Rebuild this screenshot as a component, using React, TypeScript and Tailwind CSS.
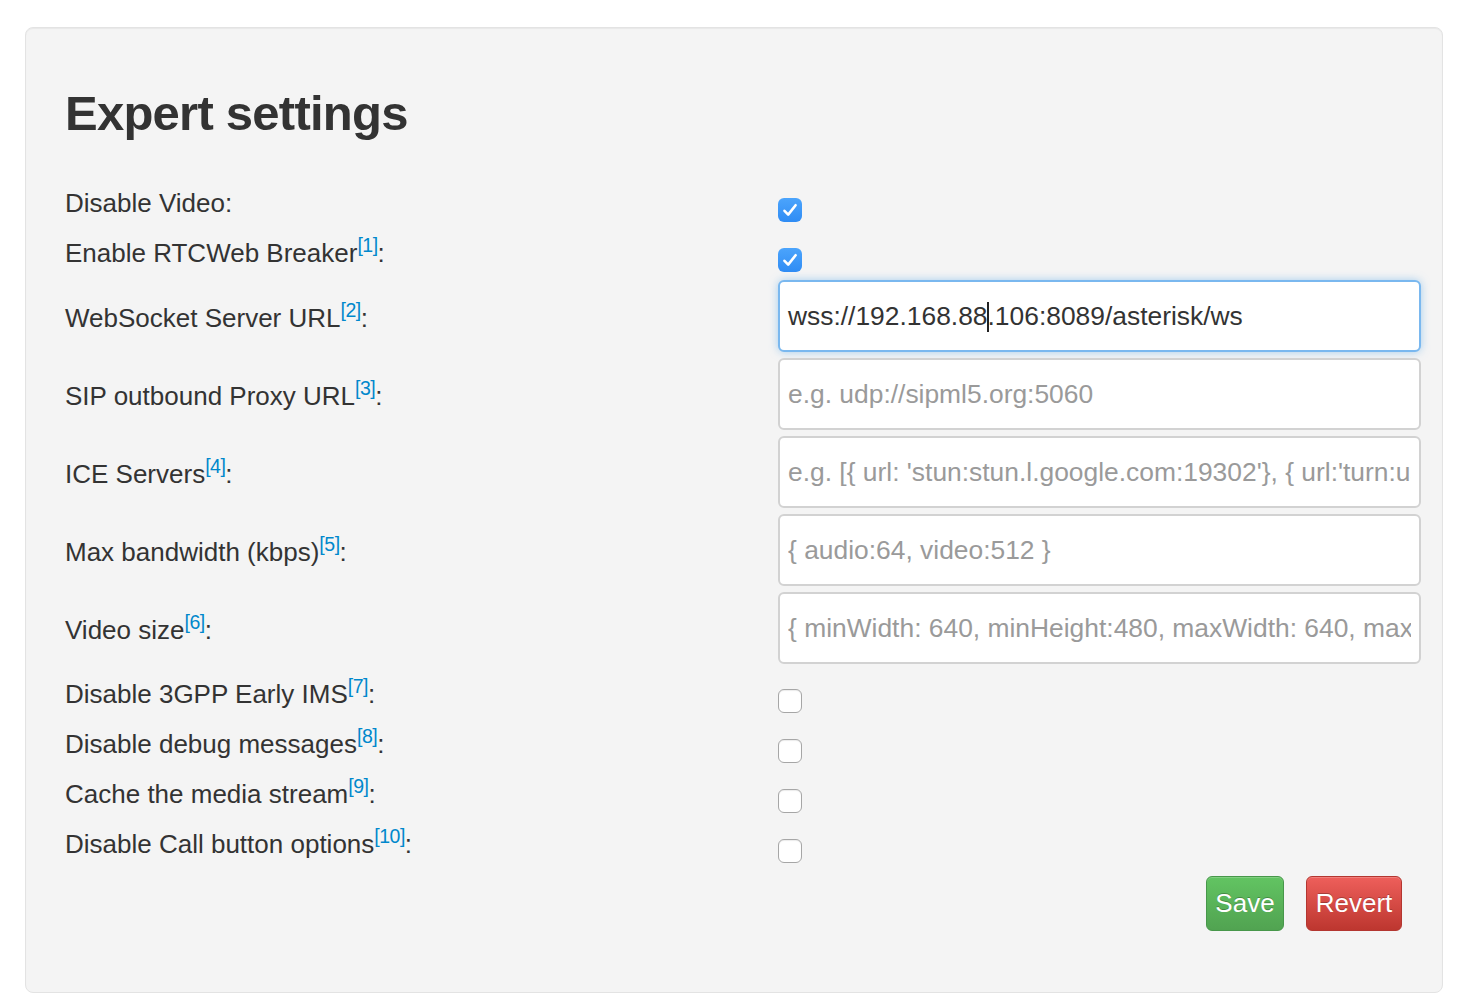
import { Fragment } from "react";

type Row =
  | { kind: "check"; label: string; note?: number; checked: boolean; h: string }
  | { kind: "text"; label: string; note: number; placeholder?: string; value?: string };

const rowsTop: Row[] = [
  { kind: "check", label: "Disable Video", checked: true, h: "h-[50px]" },
  { kind: "check", label: "Enable RTCWeb Breaker", note: 1, checked: true, h: "h-[45px]" },
];

const rowsText: Row[] = [
  { kind: "text", label: "WebSocket Server URL", note: 2, value: "wss://192.168.88.106:8089/asterisk/ws" },
  { kind: "text", label: "SIP outbound Proxy URL", note: 3, placeholder: "e.g. udp://sipml5.org:5060" },
  {
    kind: "text",
    label: "ICE Servers",
    note: 4,
    placeholder: "e.g. [{ url: 'stun:stun.l.google.com:19302'}, { url:'turn:user@numb.viagenie.ca', credential:'myPassword'}]",
  },
  { kind: "text", label: "Max bandwidth (kbps)", note: 5, placeholder: "{ audio:64, video:512 }" },
  {
    kind: "text",
    label: "Video size",
    note: 6,
    placeholder: "{ minWidth: 640, minHeight:480, maxWidth: 640, maxHeight:480, minFrameRate:15, maxFrameRate:30 }",
  },
];

const rowsBottom: Row[] = [
  { kind: "check", label: "Disable 3GPP Early IMS", note: 7, checked: false, h: "h-[50px]" },
  { kind: "check", label: "Disable debug messages", note: 8, checked: false, h: "h-[50px]" },
  { kind: "check", label: "Cache the media stream", note: 9, checked: false, h: "h-[50px]" },
  { kind: "check", label: "Disable Call button options", note: 10, checked: false, h: "h-[50px]" },
];

function Label({ text, note }: { text: string; note?: number }) {
  return (
    <span className="block h-[36px] leading-[36px] text-[26px] text-[#333] whitespace-nowrap">
      {text}
      {note !== undefined && <sup className="text-[#0088cc] tracking-[-0.5px]">[{note}]</sup>}:
    </span>
  );
}

function Checkbox({ checked }: { checked: boolean }) {
  if (checked)
    return (
      <div className="w-[24px] h-[24px] rounded-[6px] bg-gradient-to-b from-[#4ba4fc] to-[#2f8cf4] flex items-center justify-center">
        <svg width="24" height="24" viewBox="0 0 24 24">
          <path d="M6.5 12.8 L10.2 16.6 L17.6 7.2" fill="none" stroke="#fff" strokeWidth="2.6" strokeLinecap="round" strokeLinejoin="round" />
        </svg>
      </div>
    );
  return (
    <div className="w-[24px] h-[24px] rounded-[6px] bg-white border border-[#a6a6a6] shadow-[inset_0_1px_1px_rgba(0,0,0,0.08)]" />
  );
}

function CheckRow({ row }: { row: Extract<Row, { kind: "check" }> }) {
  return (
    <div className={`flex items-start ${row.h}`}>
      <div className="w-[713px] shrink-0">
        <Label text={row.label} note={row.note} />
      </div>
      <div className="pt-[13px]">
        <Checkbox checked={row.checked} />
      </div>
    </div>
  );
}

function TextRow({ row, first }: { row: Extract<Row, { kind: "text" }>; first: boolean }) {
  return (
    <div className="flex items-center h-[72px] mb-[6px] last:mb-0">
      <div className="w-[713px] shrink-0 pt-[4px]">
        <Label text={row.label} note={row.note} />
      </div>
      {first ? (
        <div className="flex-1 h-[72px] rounded-[6px] bg-white border-2 border-[#7ab8ef] shadow-[0_0_8px_rgba(102,175,233,0.55)] flex items-center px-[8px] pt-[1px] text-[26.4px] text-[#333] whitespace-nowrap overflow-hidden">
          <span>wss://192.168.88</span>
          <span className="inline-block w-[2px] h-[30px] bg-[#222] -mx-[1px]" />
          <span>.106:8089/asterisk/ws</span>
        </div>
      ) : (
        <input
          readOnly
          placeholder={row.placeholder}
          className="flex-1 min-w-0 h-[72px] rounded-[6px] bg-white border-2 border-[#d2d2d2] px-[8px] pt-[1px] text-[26.4px] text-[#333] placeholder:text-[#9a9a9a] outline-none"
          style={{ fontFamily: "inherit" }}
        />
      )}
    </div>
  );
}

export default function App() {
  return (
    <div className="min-h-[1006px] bg-white pt-[27px] pl-[25px] pr-[19px] font-['Liberation_Sans',Arial,sans-serif]">
      <div className="h-[966px] rounded-[8px] border border-[#e3e3e3] bg-[#f4f4f4] shadow-[inset_0_1px_1px_rgba(0,0,0,0.05)] pl-[39px] pr-[21px] pt-[58px]">
        <h2 className="h-[54px] leading-[54px] text-[49px] font-bold text-[#333] tracking-[-0.75px]">Expert settings</h2>
        <div className="mt-[45px]">
          {rowsTop.map((r, i) => (
            <Fragment key={i}>{r.kind === "check" && <CheckRow row={r} />}</Fragment>
          ))}
          <div>
            {rowsText.map((r, i) => (
              <Fragment key={i}>{r.kind === "text" && <TextRow row={r} first={i === 0} />}</Fragment>
            ))}
          </div>
          <div className="mt-[12px]">
            {rowsBottom.map((r, i) => (
              <Fragment key={i}>{r.kind === "check" && <CheckRow row={r} />}</Fragment>
            ))}
          </div>
          <div className="flex justify-end gap-[22px] pr-[19px]">
            <button className="h-[55px] w-[78px] rounded-[6px] border border-[#47974a] bg-gradient-to-b from-[#62c462] to-[#51a351] text-white text-[26px] [text-shadow:0_-1px_0_rgba(0,0,0,0.25)] shadow-[inset_0_1px_0_rgba(255,255,255,0.2)]">
              Save
            </button>
            <button className="h-[55px] w-[96px] rounded-[6px] border border-[#b33630] bg-gradient-to-b from-[#ee5f5b] to-[#bd362f] text-white text-[26px] [text-shadow:0_-1px_0_rgba(0,0,0,0.25)] shadow-[inset_0_1px_0_rgba(255,255,255,0.2)]">
              Revert
            </button>
          </div>
        </div>
      </div>
    </div>
  );
}
